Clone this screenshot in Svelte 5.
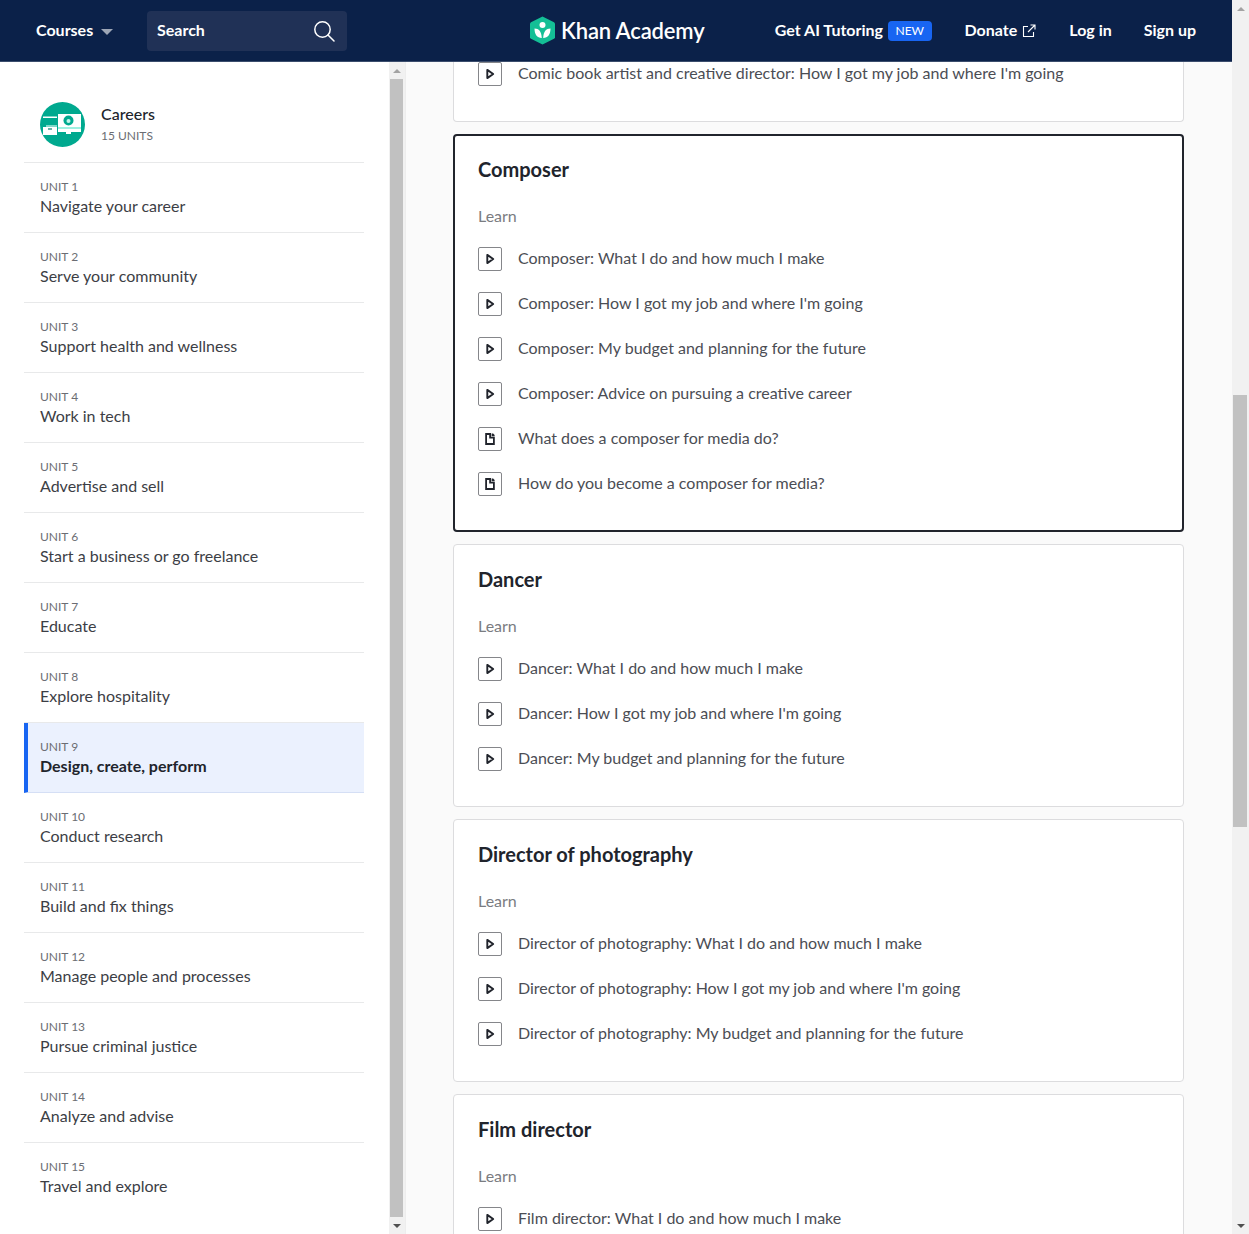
<script>
	const units = [
		'Navigate your career',
		'Serve your community',
		'Support health and wellness',
		'Work in tech',
		'Advertise and sell',
		'Start a business or go freelance',
		'Educate',
		'Explore hospitality',
		'Design, create, perform',
		'Conduct research',
		'Build and fix things',
		'Manage people and processes',
		'Pursue criminal justice',
		'Analyze and advise',
		'Travel and explore'
	];
	const cards = [
		{
			title: 'Composer',
			selected: true,
			items: [
				['video', 'Composer: What I do and how much I make'],
				['video', "Composer: How I got my job and where I'm going"],
				['video', 'Composer: My budget and planning for the future'],
				['video', 'Composer: Advice on pursuing a creative career'],
				['doc', 'What does a composer for media do?'],
				['doc', 'How do you become a composer for media?']
			]
		},
		{
			title: 'Dancer',
			items: [
				['video', 'Dancer: What I do and how much I make'],
				['video', "Dancer: How I got my job and where I'm going"],
				['video', 'Dancer: My budget and planning for the future']
			]
		},
		{
			title: 'Director of photography',
			items: [
				['video', 'Director of photography: What I do and how much I make'],
				['video', "Director of photography: How I got my job and where I'm going"],
				['video', 'Director of photography: My budget and planning for the future']
			]
		},
		{
			title: 'Film director',
			items: [['video', 'Film director: What I do and how much I make']]
		}
	];
</script>

{#snippet itemIcon(kind)}
	<span class="item-icon">
		{#if kind === 'video'}
			<svg width="12" height="12" viewBox="0 0 12 12"><path d="M3.300 1.900v8.200L9.200 6z" fill="#fff" stroke="#21242c" stroke-width="1.900" stroke-linejoin="round" /></svg>
		{:else}
			<svg width="12" height="12" viewBox="0 0 12 12"><path d="M2.100 1h4v3.700h3.800V11H2.100z" fill="none" stroke="#21242c" stroke-width="1.800" /><path d="M7.600 0.500h1.500l1.500 1.500v1.200H7.600z" fill="#21242c" /></svg>
		{/if}
	</span>
{/snippet}

{#snippet scrollbar(thumbClass)}
	<div class="arrow"><span class="tri up"></span></div>
	<div class="track"><div class="thumb {thumbClass}"></div></div>
	<div class="arrow"><span class="tri down"></span></div>
{/snippet}

<div class="page">
	<div class="window">
		<header>
			<a class="courses" href="#courses"><span class="lift">Courses</span><span class="caret"></span></a>
			<div class="search">
				<span class="lift">Search</span>
				<svg width="22" height="22" viewBox="0 0 22 22" fill="none" stroke="#fff" stroke-width="1.5"><circle cx="9.5" cy="9.5" r="7.7" /><path d="M15 15l6 6" stroke-linecap="round" /></svg>
			</div>
			<a class="logo" href="#home">
				<svg width="27" height="29" viewBox="0 0 27 29">
					<path d="M13.5 0.5L25 6.2a2 2 0 0 1 1 1.6v13.4a2 2 0 0 1-1 1.6L13.5 28.5 2 22.8a2 2 0 0 1-1-1.6V7.800a2 2 0 0 1 1-1.600z" fill="#14bf96" />
					<circle cx="13.5" cy="9" r="3" fill="#fff" />
					<path d="M5.500 12.500c4.500 0 7 3 7.300 9.500-4.800-.3-7.300-3.500-7.300-9.500zM21.500 12.500c-4.500 0-7 3-7.300 9.500 4.800-.3 7.300-3.500 7.300-9.500z" fill="#fff" />
				</svg>
				<span>Khan Academy</span>
			</a>
			<nav>
				<a class="tutoring" href="#ai"><span class="lift">Get AI Tutoring</span><span class="badge">NEW</span></a>
				<a class="donate" href="#donate"><span class="lift">Donate</span>
					<svg width="14" height="14" viewBox="0 0 14 14" fill="none" stroke="#fff" stroke-width="1.1"><path d="M6 2.500H1.500v10h10V8M8.500 1h4.500v4.500M13 1L6 8" /></svg>
				</a>
				<a class="lift" href="#login">Log in</a>
				<a class="lift" href="#signup">Sign up</a>
			</nav>
		</header>

		<div class="content">
			<aside>
				<div class="side-head">
					<svg class="course-icon" width="45" height="45" viewBox="0 0 45 45">
						<circle cx="22.500" cy="22.500" r="22.500" fill="#00a98f" />
						<path d="M3 14.500h14V16H3zM3 25h14v8H3z" fill="#fff" />
						<path d="M6 23h11v2H6z" fill="#7fd8c9" />
						<path d="M8 27h4" stroke="#0b7e6d" stroke-width="1.200" />
						<rect x="18" y="12" width="23" height="18" fill="#fff" />
						<rect x="18" y="25" width="23" height="2" fill="#9ef0e0" />
						<rect x="26" y="30" width="5" height="2" fill="#fff" />
						<circle cx="28.500" cy="18.500" r="5" fill="#00a98f" />
						<circle cx="28.500" cy="19" r="2" fill="#bff5ea" />
					</svg>
					<div>
						<div class="side-title">Careers</div>
						<div class="side-sub">15 UNITS</div>
					</div>
				</div>
				{#each units as name, i}
					<a class="unit" class:active={i === 8} href="#unit">
						<div class="unit-label">UNIT {i + 1}</div>
						<div class="unit-name">{name}</div>
					</a>
				{/each}
			</aside>
			<div class="side-scroll">{@render scrollbar('side-thumb')}</div>
			<main>
				<section class="card stub">
					<div class="item">
						{@render itemIcon('video')}
						<span class="item-text">Comic book artist and creative director: How I got my job and where I'm going</span>
					</div>
				</section>
				{#each cards as card}
					<section class="card" class:selected={card.selected}>
						<h2>{card.title}</h2>
						<div class="learn">Learn</div>
						{#each card.items as [kind, text]}
							<div class="item">
								{@render itemIcon(kind)}
								<span class="item-text">{text}</span>
							</div>
						{/each}
					</section>
				{/each}
			</main>
		</div>
	</div>
	<div class="page-scroll">{@render scrollbar('page-thumb')}</div>
</div>

<style>
	:global(body) {
		margin: 0;
		font-family: Lato, 'Noto Sans', sans-serif;
		color: #21242c;
		overflow: hidden;
	}

	a {
		text-decoration: none;
		color: inherit;
	}

	.page {
		display: flex;
		width: 1249px;
		height: 1234px;
		overflow: hidden;
	}

	.window {
		width: 1232px;
		display: flex;
		flex-direction: column;
	}

	header {
		flex: none;
		box-sizing: border-box;
		height: 62px;
		display: flex;
		align-items: center;
		padding: 0 36px;
		background: #0b2149;
		border-bottom: 1px solid #3b4d6d;
		color: #fff;
		font-size: 16px;
		font-weight: 700;
	}

	.lift {
		margin-bottom: 2px;
	}

	.courses {
		display: flex;
		align-items: center;
		width: 111px;
	}

	.caret {
		margin-left: 8px;
		margin-top: 2px;
		border-left: 6px solid transparent;
		border-right: 6px solid transparent;
		border-top: 6px solid #9da6b6;
	}

	.search {
		box-sizing: border-box;
		width: 200px;
		height: 40px;
		display: flex;
		align-items: center;
		justify-content: space-between;
		padding: 0 12px 0 10px;
		background: #203156;
		border-radius: 4px;
	}

	.logo {
		display: flex;
		align-items: center;
		margin-left: 182px;
		gap: 5px;
		font-size: 22px;
		font-weight: 600;
		letter-spacing: -0.15px;
	}

	nav {
		margin-left: auto;
		display: flex;
		align-items: center;
		gap: 32px;
	}

	.tutoring,
	.donate {
		display: flex;
		align-items: center;
		margin-right: 1px;
	}

	.badge {
		margin-left: 5px;
		padding: 0 7.5px;
		height: 20px;
		line-height: 20px;
		border-radius: 4px;
		background: #1865f2;
		font-size: 12px;
		font-weight: 400;
	}

	.donate svg {
		margin-left: 5px;
		margin-top: 1px;
	}

	.content {
		flex: 1;
		min-height: 0;
		display: flex;
	}

	aside {
		box-sizing: border-box;
		width: 389px;
		flex: none;
		padding: 40px 25px 0 24px;
		background: #fff;
	}

	.side-head {
		display: flex;
		align-items: flex-start;
		gap: 16px;
		padding: 0 16px 15px;
		border-bottom: 1px solid #e8e9ea;
	}

	.course-icon {
		flex: none;
	}

	.side-title {
		margin-top: 2px;
		font-size: 16px;
		font-weight: 500;
		line-height: 20px;
	}

	.side-sub {
		margin-top: 3px;
		font-size: 12px;
		line-height: 18px;
		color: #6b6d73;
	}

	.unit {
		display: block;
		box-sizing: border-box;
		height: 70px;
		padding: 15px 16px 0;
		border-bottom: 1px solid #e8e9ea;
	}

	.unit:last-child {
		border-bottom: none;
	}

	.unit-label {
		font-size: 12px;
		line-height: 18px;
		color: #6b6d73;
	}

	.unit-name {
		font-size: 16px;
		line-height: 20px;
		color: #3c3e45;
	}

	.unit.active {
		padding-left: 12px;
		background: #ebf1fe;
		border-left: 4px solid #1865f2;
		border-bottom-color: #d5dff5;
	}

	.unit.active .unit-name {
		color: #21242c;
		font-weight: 700;
	}

	.side-scroll,
	.page-scroll {
		flex: none;
		display: flex;
		flex-direction: column;
		background: #f1f1f1;
	}

	.side-scroll {
		width: 16px;
	}

	.page-scroll {
		width: 17px;
	}

	.arrow {
		flex: none;
		height: 17px;
		display: flex;
		align-items: center;
		justify-content: center;
	}

	.tri {
		border-left: 4px solid transparent;
		border-right: 4px solid transparent;
	}

	.tri.up {
		border-bottom: 4px solid #a3a3a3;
	}

	.tri.down {
		border-top: 4px solid #505050;
	}

	.track {
		flex: 1;
		min-height: 0;
		padding: 0 2px 0 1px;
	}

	.side-thumb {
		height: 100%;
		background: #c1c1c1;
	}

	.page-thumb {
		margin-top: 378px;
		height: 432px;
		background: #c1c1c1;
	}

	main {
		flex: 1;
		min-width: 0;
		overflow: hidden;
		box-sizing: border-box;
		padding-left: 47px;
		background: #fafafa;
		border-left: 1px solid #ededed;
	}

	.card {
		box-sizing: border-box;
		width: 731px;
		margin-bottom: 12px;
		padding: 20px 24px 35px;
		background: #fff;
		border: 1px solid #dcdcde;
		border-radius: 4px;
	}

	.card.stub {
		height: 60px;
		padding-top: 0;
		border-top: none;
		border-radius: 0 0 4px 4px;
	}

	.card.stub .item {
		margin-top: 0;
	}

	.card.selected {
		padding: 19px 23px 34px;
		border: 2px solid #21242c;
	}

	h2 {
		margin: 0;
		font-size: 20px;
		line-height: 28px;
		font-weight: 700;
	}

	.learn {
		margin-top: 23px;
		margin-bottom: 21px;
		font-size: 16px;
		line-height: 20px;
		color: #7a7c81;
	}

	.item {
		display: flex;
		align-items: center;
		gap: 16px;
		height: 24px;
		margin-top: 21px;
		font-size: 16px;
		color: #4b4d54;
	}

	.item-text {
		margin-bottom: 4px;
	}

	.learn + .item {
		margin-top: 0;
	}

	.item-icon {
		flex: none;
		box-sizing: border-box;
		width: 24px;
		height: 24px;
		display: flex;
		align-items: center;
		justify-content: center;
		border: 1px solid #85868a;
		border-radius: 2px;
		background: #fff;
	}
</style>
